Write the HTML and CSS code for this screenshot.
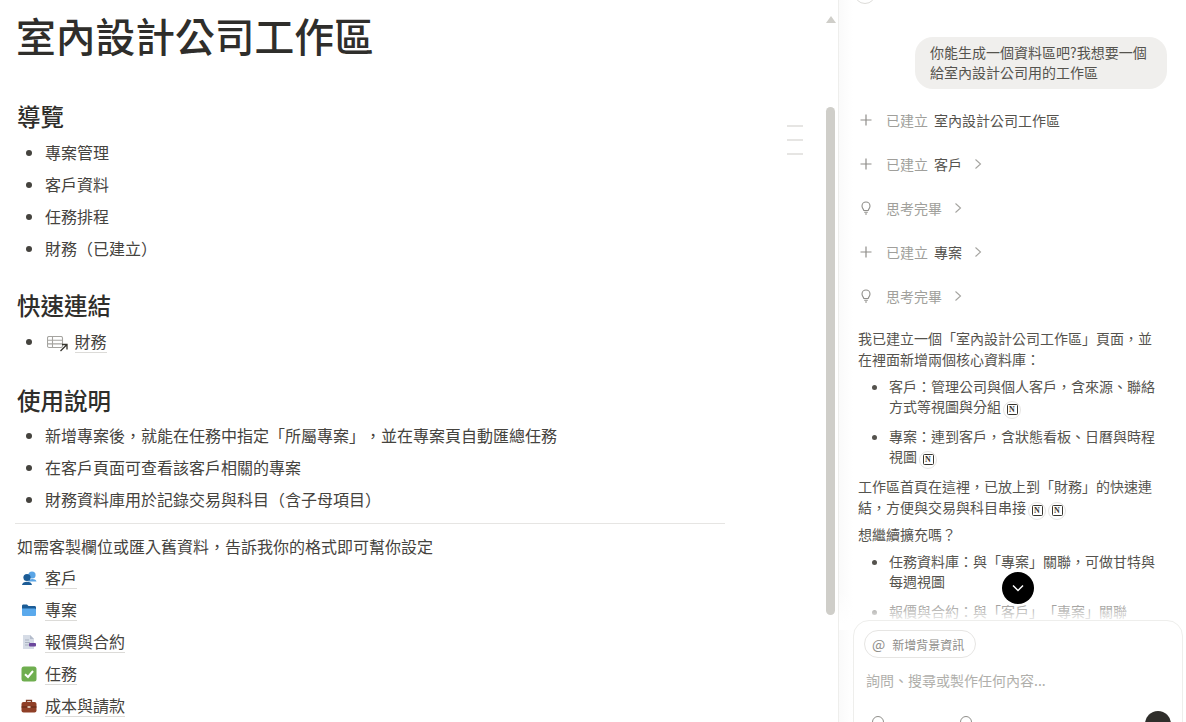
FILE: index.html
```html
<!DOCTYPE html>
<html lang="zh-Hant">
<head>
    <meta charset="UTF-8">
    <title>室內設計公司工作區</title>
    <link rel="stylesheet" href="styles.css">
</head>
<body>
    <main class="pagina">
        <h1>室內設計公司工作區</h1>

        <h2 class="primero">導覽</h2>
        <ul class="lista">
            <li>專案管理</li>
            <li>客戶資料</li>
            <li>任務排程</li>
            <li>財務（已建立）</li>
        </ul>

        <h2>快速連結</h2>
        <ul class="lista">
            <li class="con-icono">
                <svg class="icono-base" width="21" height="16" viewBox="0 0 21 16" fill="none">
                    <rect x="0.500" y="0.500" width="15" height="11" rx="1.500" stroke="#a5a4a0" stroke-width="1.100"/>
                    <path d="M0.500 4.200H15.500M0.500 7.900H15.500M5.500 0.500V11.500" stroke="#a5a4a0" stroke-width="1.100"/>
                    <path d="M13.500 15L19.500 9M15 8.500H20V13.500" stroke="#37352f" stroke-width="1.300"/>
                </svg>
                <span class="enlace">財務</span>
            </li>
        </ul>

        <h2 class="tercero">使用說明</h2>
        <ul class="lista">
            <li>新增專案後，就能在任務中指定「所屬專案」，並在專案頁自動匯總任務</li>
            <li>在客戶頁面可查看該客戶相關的專案</li>
            <li>財務資料庫用於記錄交易與科目（含子母項目）</li>
        </ul>

        <hr class="separador">
        <p class="nota">如需客製欄位或匯入舊資料，告訴我你的格式即可幫你設定</p>

        <div class="fila-pagina">
            <svg width="16" height="16" viewBox="0 0 16 16">
                <circle cx="11" cy="5" r="3.600" fill="#5aa5e6"/>
                <path d="M7 11.500C7.500 8.500 14.500 8 15.500 11.500Z" fill="#5aa5e6"/>
                <circle cx="6" cy="7.500" r="3.600" fill="#1c5c96"/>
                <path d="M1 15C1 10.500 11 10.500 11 15Z" fill="#1c5c96"/>
            </svg>
            <span class="enlace">客戶</span>
        </div>
        <div class="fila-pagina">
            <svg width="16" height="16" viewBox="0 0 16 16">
                <path d="M1 4C1 3 1.600 2.500 2.500 2.500H6L7.500 4H13.500C14.500 4 15 4.600 15 5.500V8H1Z" fill="#1c5c96"/>
                <path d="M1 6.500H13.500C14.500 6.500 15 7 15 8V12.500C15 13.500 14.500 14 13.500 14H2.500C1.500 14 1 13.500 1 12.500Z" fill="#5aa9ec"/>
            </svg>
            <span class="enlace">專案</span>
        </div>
        <div class="fila-pagina">
            <svg width="16" height="16" viewBox="0 0 16 16">
                <path d="M2 1H9L13 5V15H2Z" fill="#d6dce6"/>
                <path d="M9 1L13 5H9Z" fill="#b4bccb"/>
                <path d="M4 6H8M4 8.500H9M4 11H8" stroke="#aab3c2" stroke-width="1"/>
                <rect x="8" y="9" width="7" height="3.500" rx="1" fill="#6b479c"/>
            </svg>
            <span class="enlace">報價與合約</span>
        </div>
        <div class="fila-pagina">
            <svg width="16" height="16" viewBox="0 0 16 16">
                <rect x="0.500" y="0.500" width="15" height="15" rx="2.500" fill="#6fae4f"/>
                <path d="M4 8.200L7 11L12 5" stroke="#fff" stroke-width="2" fill="none"/>
            </svg>
            <span class="enlace">任務</span>
        </div>
        <div class="fila-pagina">
            <svg width="16" height="16" viewBox="0 0 16 16">
                <path d="M5.500 4V2.500H10.500V4" stroke="#7c3a24" stroke-width="1.300" fill="none"/>
                <rect x="0.500" y="4" width="15" height="10.500" rx="2" fill="#8f3f27"/>
                <rect x="0.500" y="8.500" width="15" height="1" fill="#5e2715"/>
                <rect x="6.500" y="8" width="3" height="2" fill="#d9b9a6"/>
            </svg>
            <span class="enlace">成本與請款</span>
        </div>
    </main>

    <!-- cosas flotantes de la pagina -->
    <div class="indice"><i></i><i></i><i></i></div>
    <div class="flecha-arriba"></div>
    <div class="barra"></div>

    <aside class="chat">
        <div class="avatar"></div>
        <div class="burbuja">你能生成一個資料區吧?我想要一個給室內設計公司用的工作區</div>

        <div class="paso primero-paso">
            <svg class="paso-icono" width="14" height="14" viewBox="0 0 14 14"><path d="M7 1.500V12.500M1.500 7H12.500" stroke="#8f8e8a" stroke-width="1.200"/></svg>
            <span>已建立</span><b>室內設計公司工作區</b>
        </div>
        <div class="paso">
            <svg class="paso-icono" width="14" height="14" viewBox="0 0 14 14"><path d="M7 1.500V12.500M1.500 7H12.500" stroke="#8f8e8a" stroke-width="1.200"/></svg>
            <span>已建立</span><b>客戶</b>
            <svg class="paso-flecha" width="8" height="12" viewBox="0 0 8 12"><path d="M1.500 1.500L6.500 6L1.500 10.500" stroke="#a5a4a0" stroke-width="1.100" fill="none"/></svg>
        </div>
        <div class="paso">
            <svg class="paso-icono" width="14" height="14" viewBox="0 0 14 14"><path d="M4.800 9.500C4.600 8 3 7.300 3 5A4 4 0 0 1 11 5C11 7.300 9.400 8 9.200 9.500ZM5.200 11.200H8.800M6 13H8" stroke="#8f8e8a" stroke-width="1.100" fill="none"/></svg>
            <span>思考完畢</span>
            <svg class="paso-flecha" width="8" height="12" viewBox="0 0 8 12"><path d="M1.500 1.500L6.500 6L1.500 10.500" stroke="#a5a4a0" stroke-width="1.100" fill="none"/></svg>
        </div>
        <div class="paso">
            <svg class="paso-icono" width="14" height="14" viewBox="0 0 14 14"><path d="M7 1.500V12.500M1.500 7H12.500" stroke="#8f8e8a" stroke-width="1.200"/></svg>
            <span>已建立</span><b>專案</b>
            <svg class="paso-flecha" width="8" height="12" viewBox="0 0 8 12"><path d="M1.500 1.500L6.500 6L1.500 10.500" stroke="#a5a4a0" stroke-width="1.100" fill="none"/></svg>
        </div>
        <div class="paso">
            <svg class="paso-icono" width="14" height="14" viewBox="0 0 14 14"><path d="M4.800 9.500C4.600 8 3 7.300 3 5A4 4 0 0 1 11 5C11 7.300 9.400 8 9.200 9.500ZM5.200 11.200H8.800M6 13H8" stroke="#8f8e8a" stroke-width="1.100" fill="none"/></svg>
            <span>思考完畢</span>
            <svg class="paso-flecha" width="8" height="12" viewBox="0 0 8 12"><path d="M1.500 1.500L6.500 6L1.500 10.500" stroke="#a5a4a0" stroke-width="1.100" fill="none"/></svg>
        </div>

        <div class="respuesta">
            <p>我已建立一個「室內設計公司工作區」頁面，並在裡面新增兩個核心資料庫：</p>
            <ul>
                <li>客戶：管理公司與個人客戶，含來源、聯絡方式等視圖與分組<span class="cita"><em>N</em></span></li>
                <li>專案：連到客戶，含狀態看板、日曆與時程視圖<span class="cita"><em>N</em></span></li>
            </ul>
            <p>工作區首頁在這裡，已放上到「財務」的快速連結，方便與交易與科目串接<span class="cita"><em>N</em></span><span class="cita"><em>N</em></span></p>
            <p>想繼續擴充嗎？</p>
            <ul>
                <li>任務資料庫：與「專案」關聯，可做甘特與每週視圖</li>
                <li>報價與合約：與「客戶」「專案」關聯</li>
            </ul>
        </div>

        <div class="desvanecer"></div>
        <div class="bajar">
            <svg width="14" height="14" viewBox="0 0 14 14"><path d="M2 4.500L7 9.500L12 4.500" stroke="#fff" stroke-width="1.500" fill="none"/></svg>
        </div>

        <div class="entrada">
            <div class="chip"><span class="arroba">@</span>新增背景資訊</div>
            <div class="placeholder">詢問、搜尋或製作任何內容...</div>
            <div class="acciones">
                <span class="punto"></span>
                <span class="punto segundo"></span>
                <span class="enviar"></span>
            </div>
        </div>
    </aside>
</body>
</html>
```

FILE: styles.css
```css
html, body {
    height: 100%;
}

body {
    margin: 0;
    display: flex;
    height: 722px;
    overflow: hidden;
    position: relative;
    background-color: white;
    color: #45433e;
    font-family: "Noto Sans CJK TC", "Liberation Sans", sans-serif;
    text-spacing-trim: space-all;
    font-kerning: none;
}

.pagina {
    width: 838px;
    flex-shrink: 0;
    box-sizing: border-box;
    padding-left: 18px;
    overflow: hidden;
}

h1 {
    margin: 0 0 0 -2px;
    font-size: 39.750px;
    line-height: 70px;
    font-weight: 500;
    color: #2f2e2b;
}

h2 {
    margin: 25px 0 4px -1px;
    font-size: 23.500px;
    line-height: 32px;
    font-weight: 500;
    color: #2f2e2b;
}

h2.primero {
    margin-top: 30px;
}

h2.tercero {
    margin-top: 27px;
    margin-bottom: 3px;
}

.lista {
    margin: 0;
    padding: 0 0 0 27px;
    font-size: 16px;
    line-height: 32px;
}

.lista li {
    height: 32px;
}

.icono-base {
    vertical-align: -4px;
    margin: 0 3px 0 2px;
}

.enlace {
    border-bottom: 1px solid #dcdbd8;
    padding-bottom: 1px;
    line-height: 20px;
    display: inline-block;
}

.separador {
    width: 710px;
    margin: 8px 0 7px -3px;
    border: none;
    border-top: 1px solid #e6e5e3;
}

.nota {
    margin: 0 0 0 -1px;
    font-size: 16px;
    line-height: 31px;
}

.fila-pagina {
    display: flex;
    align-items: center;
    gap: 8px;
    height: 32px;
    font-size: 16px;
    padding-left: 3px;
}

/* indice lateral */
.indice {
    position: absolute;
    left: 787px;
    top: 125px;
    display: flex;
    flex-direction: column;
    gap: 12px;
}

.indice i {
    display: block;
    width: 16px;
    height: 2px;
    background-color: #e6e5e3;
}

.flecha-arriba {
    position: absolute;
    left: 826px;
    top: 16px;
    border-left: 5px solid transparent;
    border-right: 5px solid transparent;
    border-bottom: 7px solid #cfcec9;
}

.barra {
    position: absolute;
    left: 826px;
    top: 107px;
    width: 9px;
    height: 508px;
    border-radius: 5px;
    background-color: #cfcec9;
}

/* panel del chat */
.chat {
    flex: 1;
    position: relative;
    border-left: 1px solid #eeeeec;
    background: linear-gradient(to right, #fafafa, white 14px);
    font-size: 14px;
    overflow: hidden;
}

.avatar {
    position: absolute;
    left: 15px;
    top: -18px;
    width: 20px;
    height: 20px;
    border: 1px solid #dddcd9;
    border-radius: 50%;
}

.burbuja {
    width: 222px;
    margin: 37px 0 0 76px;
    padding: 5px 15px 7px;
    border-radius: 18px;
    background-color: #f0efed;
    line-height: 20px;
    color: #55534e;
}

.paso {
    display: flex;
    align-items: center;
    height: 44px;
    padding-left: 20px;
    color: #a09f9b;
}

.primero-paso {
    margin-top: 9px;
}

.paso-icono {
    margin-right: 13px;
}

.paso b {
    margin-left: 6px;
    font-weight: 400;
    color: #55534e;
}

.paso-flecha {
    margin-left: 12px;
}

.respuesta {
    padding: 10px 28px 0 19px;
    line-height: 21px;
    color: #55534e;
}

.respuesta p {
    margin: 0 0 6px;
}

.respuesta ul {
    margin: 0 0 10px;
    padding-left: 31px;
}

.respuesta li {
    margin-bottom: 10px;
    line-height: 20px;
}

.cita {
    display: inline-flex;
    align-items: center;
    justify-content: center;
    width: 16px;
    height: 16px;
    margin: -4px 0 -4px 2px;
    vertical-align: 0;
    border: 1px solid #e6e5e3;
    border-radius: 50%;
    background-color: white;
}

.cita em {
    display: block;
    width: 9px;
    height: 9px;
    border: 1.500px solid #37352f;
    border-radius: 1.500px;
    font: 700 8px/9px "Liberation Serif", serif;
    text-align: center;
    color: #37352f;
}

.desvanecer {
    position: absolute;
    left: 0;
    right: 0;
    top: 590px;
    height: 40px;
    background: linear-gradient(to bottom, rgba(255, 255, 255, 0), white 85%);
}

.bajar {
    position: absolute;
    left: 163px;
    top: 572px;
    width: 32px;
    height: 32px;
    display: flex;
    align-items: center;
    justify-content: center;
    border-radius: 50%;
    background-color: black;
}

.entrada {
    position: absolute;
    left: 14px;
    top: 620px;
    width: 330px;
    height: 130px;
    box-sizing: border-box;
    padding: 9px 10px;
    border: 1px solid #eeeeec;
    border-radius: 16px;
    background-color: white;
}

.chip {
    display: inline-flex;
    align-items: center;
    box-sizing: border-box;
    width: 112px;
    height: 28px;
    padding-left: 7px;
    border: 1px solid #e6e5e3;
    border-radius: 14px;
    font-size: 12px;
    color: #8f8e8a;
}

.arroba {
    margin-right: 7px;
    font-size: 14px;
    color: #8f8e8a;
}

.placeholder {
    margin: 12px 0 0 2px;
    line-height: 20px;
    color: #b0afab;
}

.acciones {
    position: relative;
    margin-top: 18px;
}

.punto {
    position: absolute;
    left: 8px;
    top: 8px;
    width: 10px;
    height: 10px;
    border: 1px solid #8f8e8a;
    border-radius: 50%;
}

.punto.segundo {
    left: 96px;
}

.enviar {
    position: absolute;
    left: 281px;
    top: 3px;
    width: 26px;
    height: 26px;
    border-radius: 50%;
    background-color: #2f2e2b;
}
```
